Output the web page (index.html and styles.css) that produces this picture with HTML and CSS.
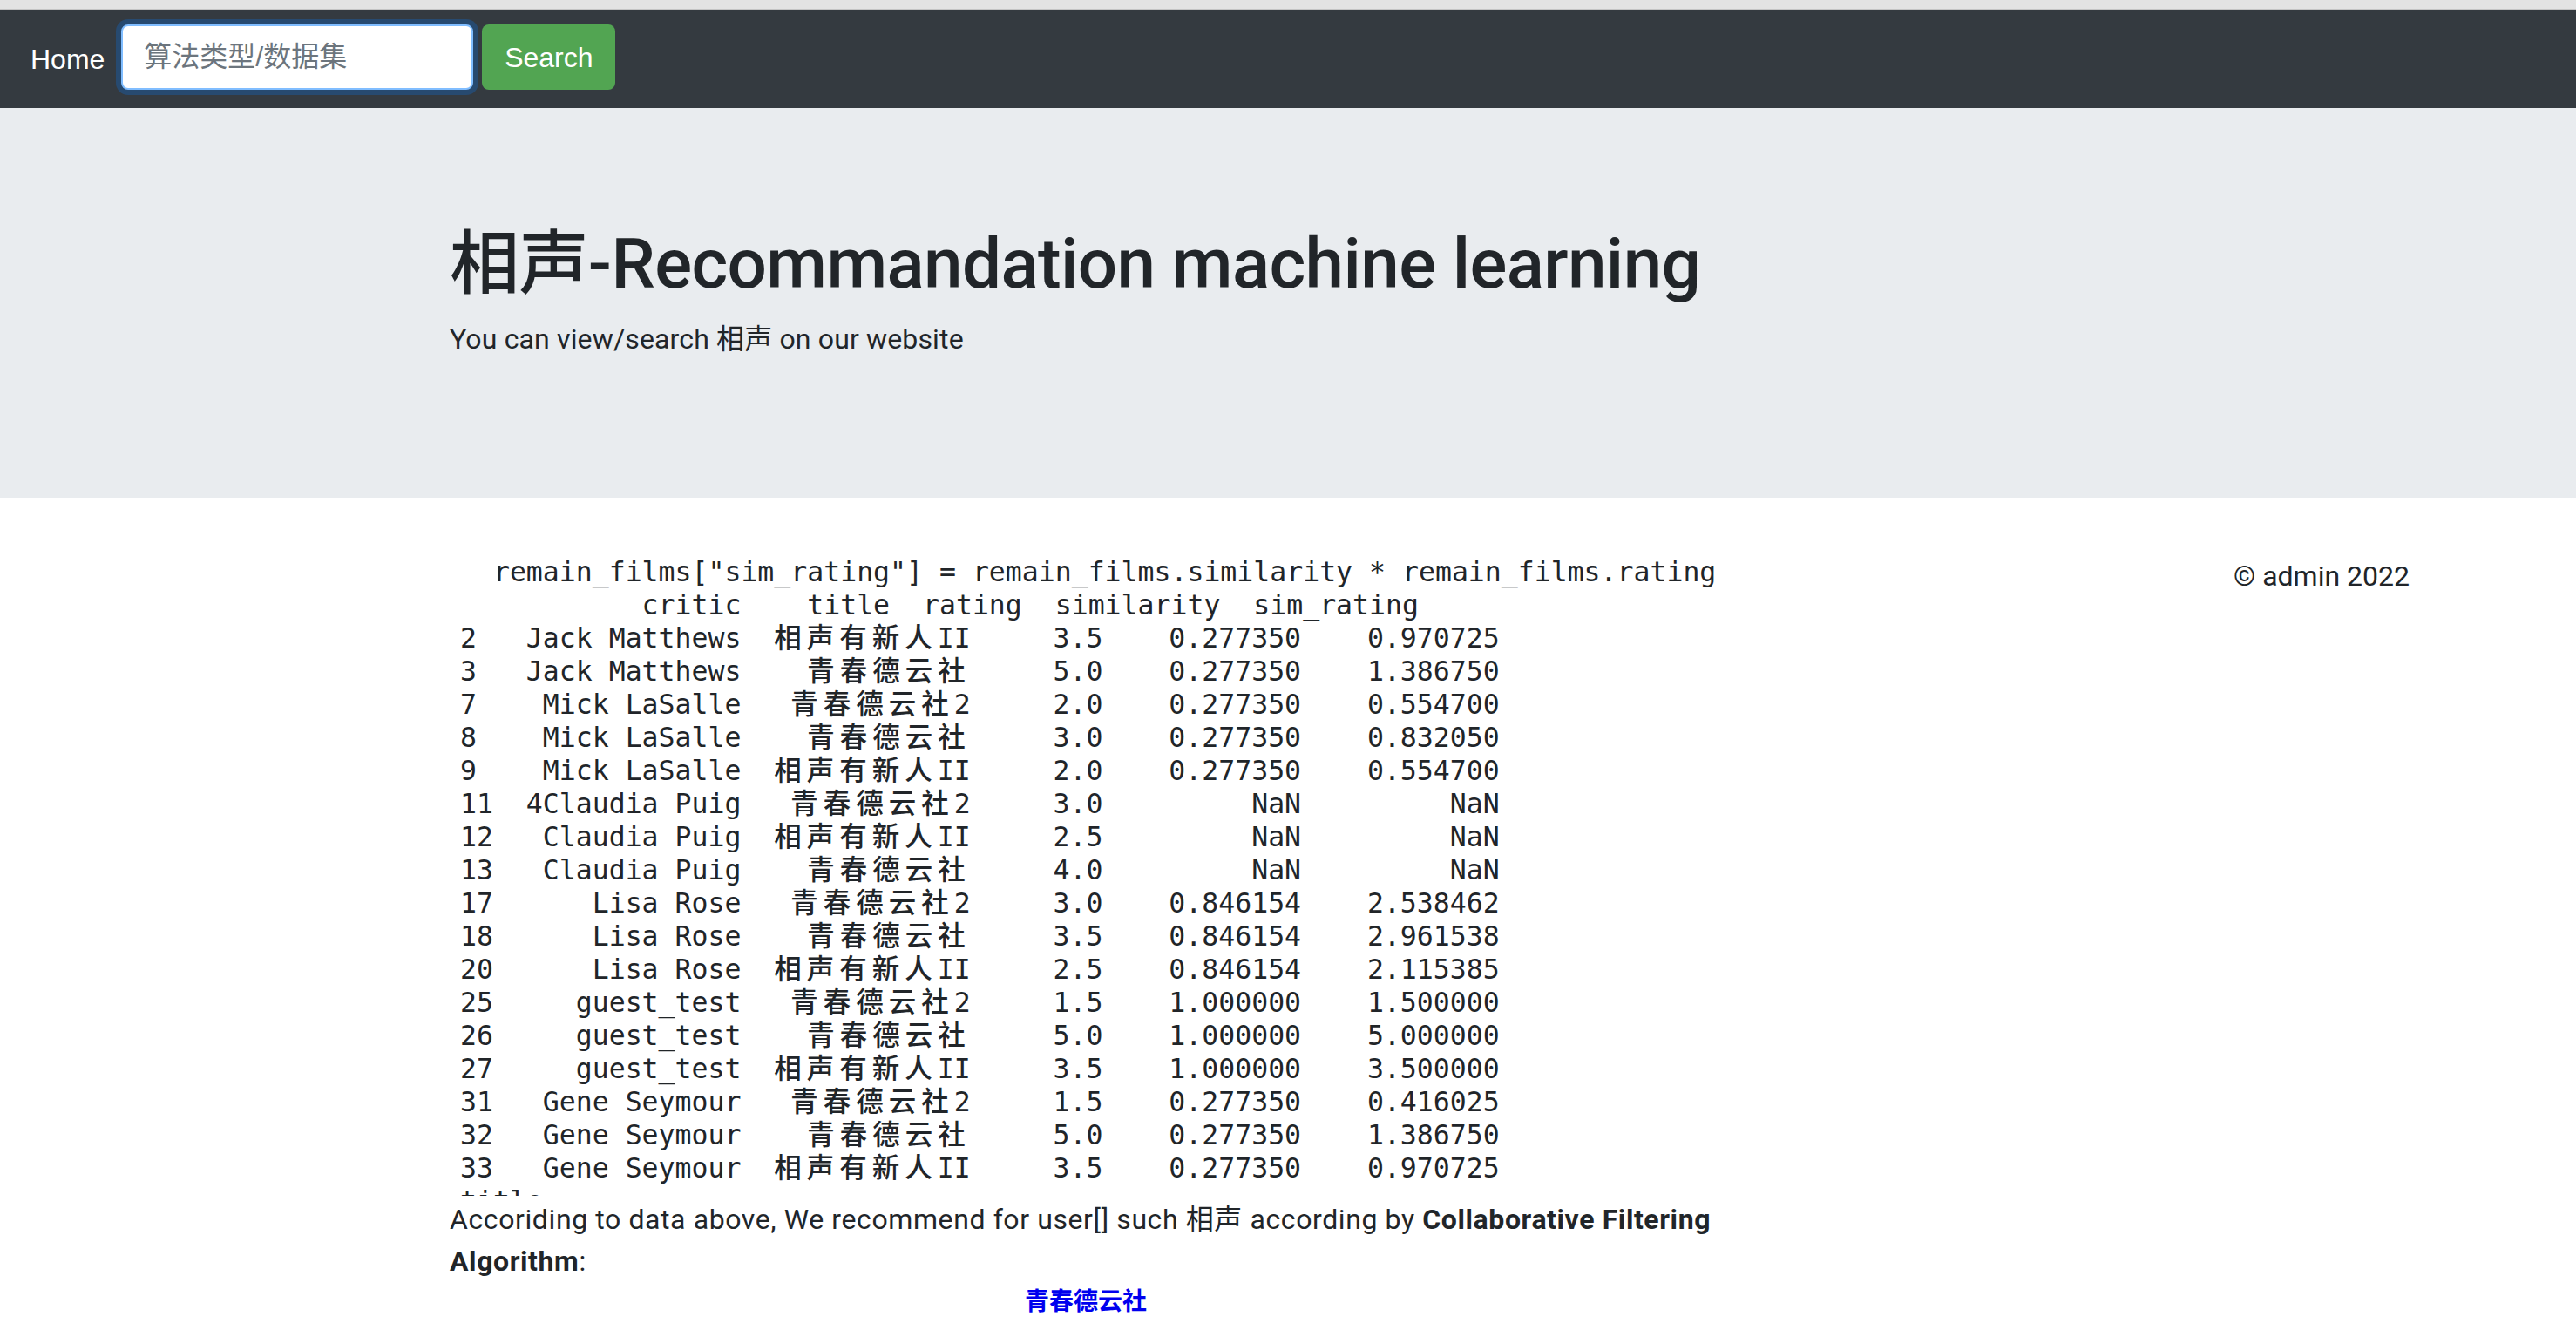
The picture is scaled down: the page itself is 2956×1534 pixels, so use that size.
FILE: index.html
```html
<!DOCTYPE html>
<html lang="zh">
<head>
<meta charset="utf-8">
<title>相声-Recommandation machine learning</title>
<link rel="stylesheet" href="styles.css">
</head>
<body>
<div class="topstrip"></div>
<nav class="navbar">
  <a class="nav-home" href="#">Home</a>
  <form class="search">
    <input class="search-input" type="text" placeholder="算法类型/数据集">
    <button class="btn-search" type="button">Search</button>
  </form>
</nav>
<header class="jumbotron">
  <h1 class="jumbo-title">相声-Recommandation machine learning</h1>
  <p class="jumbo-lead">You can view/search 相声 on our website</p>
</header>
<div class="content">
  <main class="main">
<pre class="output">  remain_films["sim_rating"] = remain_films.similarity * remain_films.rating
           critic    title  rating  similarity  sim_rating
2   Jack Matthews  <span class="cjk">相声有新人</span>II     3.5    0.277350    0.970725
3   Jack Matthews    <span class="cjk">青春德云社</span>     5.0    0.277350    1.386750
7    Mick LaSalle   <span class="cjk">青春德云社</span>2     2.0    0.277350    0.554700
8    Mick LaSalle    <span class="cjk">青春德云社</span>     3.0    0.277350    0.832050
9    Mick LaSalle  <span class="cjk">相声有新人</span>II     2.0    0.277350    0.554700
11  4Claudia Puig   <span class="cjk">青春德云社</span>2     3.0         NaN         NaN
12   Claudia Puig  <span class="cjk">相声有新人</span>II     2.5         NaN         NaN
13   Claudia Puig    <span class="cjk">青春德云社</span>     4.0         NaN         NaN
17      Lisa Rose   <span class="cjk">青春德云社</span>2     3.0    0.846154    2.538462
18      Lisa Rose    <span class="cjk">青春德云社</span>     3.5    0.846154    2.961538
20      Lisa Rose  <span class="cjk">相声有新人</span>II     2.5    0.846154    2.115385
25     guest_test   <span class="cjk">青春德云社</span>2     1.5    1.000000    1.500000
26     guest_test    <span class="cjk">青春德云社</span>     5.0    1.000000    5.000000
27     guest_test  <span class="cjk">相声有新人</span>II     3.5    1.000000    3.500000
31   Gene Seymour   <span class="cjk">青春德云社</span>2     1.5    0.277350    0.416025
32   Gene Seymour    <span class="cjk">青春德云社</span>     5.0    0.277350    1.386750
33   Gene Seymour  <span class="cjk">相声有新人</span>II     3.5    0.277350    0.970725
title
</pre>
    <p class="reco">Accoriding to data above, We recommend for user[] such 相声 according by <b>Collaborative Filtering Algorithm</b>:</p>
    <div class="result"><a class="result-link" href="#">青春德云社</a></div>
  </main>
  <footer class="footer">© admin 2022</footer>
</div>
</body>
</html>
```

FILE: styles.css
```css
* {
  box-sizing: border-box;
}

html,
body {
  margin: 0;
  padding: 0;
}

body {
  font-family: Roboto, "Noto Sans CJK SC", sans-serif;
  font-size: 32px;
  line-height: 48px;
  color: #212529;
  background: #ffffff;
}

.topstrip {
  height: 11px;
  background: #e3e3e3;
  border-bottom: 1px solid #c4c4c4;
}

.navbar {
  height: 113px;
  background: #343a40;
  display: flex;
  align-items: flex-start;
  padding: 17px 0 0 35px;
}

.nav-home {
  color: #ffffff;
  font-family: "Liberation Sans", "Noto Sans CJK SC", sans-serif;
  font-size: 32px;
  line-height: 75px;
  padding-top: 3px;
  text-decoration: none;
  margin-right: 19px;
}

.search {
  display: flex;
  margin: 0;
}

.search-input {
  width: 404px;
  height: 75px;
  margin: 0;
  padding: 0 24px;
  border: 2px solid #80bdff;
  border-radius: 8px;
  background: #ffffff;
  box-shadow: 0 0 0 6px rgba(0, 123, 255, 0.25);
  font-family: "Liberation Sans", "Noto Sans CJK SC", sans-serif;
  font-size: 32px;
  color: #495057;
  outline: none;
}

.search-input::placeholder {
  color: #6c757d;
  opacity: 1;
}

.btn-search {
  width: 153px;
  height: 75px;
  margin: 0 0 0 10px;
  padding: 2px 0 0;
  border: none;
  border-radius: 8px;
  background: #52a552;
  color: #ffffff;
  font-family: "Liberation Sans", "Noto Sans CJK SC", sans-serif;
  font-size: 32px;
}

.jumbotron {
  background: #e9ecef;
  padding: 131px 0 126px 516px;
}

.jumbo-title {
  margin: 0 0 14px;
  font-size: 80px;
  line-height: 96px;
  font-weight: 500;
  letter-spacing: -0.6px;
}

.jumbo-lead {
  margin: 0 0 32px;
  font-size: 32px;
  line-height: 48px;
  letter-spacing: 0.15px;
}

.content {
  display: flex;
  align-items: flex-start;
  padding-left: 516px;
  margin-top: 66px;
}

.main {
  flex: none;
  width: 1460px;
}

.output {
  margin: 0;
  padding-left: 12px;
  height: 735px;
  overflow: hidden;
  font-family: "DejaVu Sans Mono", "Noto Sans CJK SC", monospace;
  font-size: 31.5px;
  line-height: 38px;
  color: #212529;
}

.cjk {
  letter-spacing: 6px;
  font-weight: 500;
}

.reco {
  margin: 3px 0 0;
  font-size: 32px;
  line-height: 48px;
  letter-spacing: 0.6px;
}

.reco b {
  font-weight: 700;
}

.result {
  text-align: center;
  line-height: 42px;
}

.result-link {
  font-size: 28px;
  font-weight: 700;
  color: #0000ee;
  text-decoration: none;
}

.footer {
  margin-left: auto;
  margin-right: 191px;
  font-size: 32px;
  line-height: 48px;
}
```
